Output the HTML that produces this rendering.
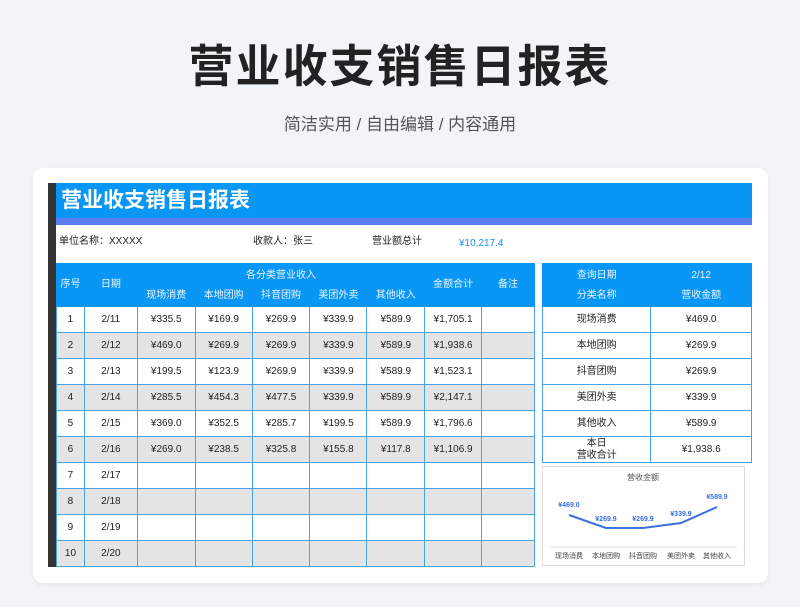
<!DOCTYPE html>
<html><head><meta charset="utf-8"><style>
*{margin:0;padding:0;box-sizing:border-box}
body{width:800px;height:607px;background:#f2f5f8;font-family:"Liberation Sans","Noto Sans CJK SC",sans-serif;position:relative;overflow:hidden;color:#222}
.a{position:absolute}
.t{left:0;width:800px;text-align:center}
.i{font-size:10px;line-height:14px;height:14px}
table{border-collapse:collapse;position:absolute;font-size:10px;text-align:center}
td{border:1px solid #4aa3e8;height:26px;color:#222;line-height:12px;vertical-align:middle}
.h td{background:#0a96f5;color:#e8f4ff;border-color:#0a96f5;height:auto}
tr.g td{background:#e4e4e4}
</style></head><body>
<div class="a t" style="top:34px;font-size:45px;line-height:66px;font-weight:bold;color:#222;letter-spacing:2px">营业收支销售日报表</div>
<div class="a t" style="top:113px;font-size:17px;line-height:24px;color:#555">简洁实用 / 自由编辑 / 内容通用</div>
<div class="a" style="left:33px;top:168px;width:735px;height:415px;background:#fff;border-radius:10px;box-shadow:0 2px 6px rgba(0,0,0,.06)"></div>
<div class="a" style="left:48px;top:183px;width:8px;height:384px;background:#333"></div>
<div class="a" style="left:56px;top:183px;width:696px;height:35px;background:#0a96f5;color:#fff;font-size:21px;line-height:30px;font-weight:bold;padding:3px 0 0 5px">营业收支销售日报表</div>
<div class="a" style="left:56px;top:218px;width:696px;height:7px;background:#5a7ef0"></div>
<div class="a i" style="left:59px;top:235px">单位名称：XXXXX</div>
<div class="a i" style="left:253px;top:235px">收款人：张三</div>
<div class="a i" style="left:372px;top:235px">营业额总计</div>
<div class="a i" style="left:459px;top:235px;color:#1e8fe8"><span style="font-family:'Noto Sans CJK SC',sans-serif">​</span>¥10,217.4</div>

<table style="left:56px;top:263px;width:479px">
<colgroup><col style="width:28px"><col style="width:53px"><col style="width:58px"><col style="width:57px"><col style="width:58px"><col style="width:57px"><col style="width:58px"><col style="width:57px"><col style="width:53px"></colgroup>
<tr class="h"><td rowspan="2" style="height:43px">序号</td><td rowspan="2">日期</td><td colspan="5" style="height:21px;padding-top:4px">各分类营业收入</td><td rowspan="2">金额合计</td><td rowspan="2">备注</td></tr>
<tr class="h"><td style="height:22px">现场消费</td><td>本地团购</td><td>抖音团购</td><td>美团外卖</td><td>其他收入</td></tr>
<tr><td>1</td><td>2/11</td><td>¥335.5</td><td>¥169.9</td><td>¥269.9</td><td>¥339.9</td><td>¥589.9</td><td>¥1,705.1</td><td></td></tr>
<tr class="g"><td>2</td><td>2/12</td><td>¥469.0</td><td>¥269.9</td><td>¥269.9</td><td>¥339.9</td><td>¥589.9</td><td>¥1,938.6</td><td></td></tr>
<tr><td>3</td><td>2/13</td><td>¥199.5</td><td>¥123.9</td><td>¥269.9</td><td>¥339.9</td><td>¥589.9</td><td>¥1,523.1</td><td></td></tr>
<tr class="g"><td>4</td><td>2/14</td><td>¥285.5</td><td>¥454.3</td><td>¥477.5</td><td>¥339.9</td><td>¥589.9</td><td>¥2,147.1</td><td></td></tr>
<tr><td>5</td><td>2/15</td><td>¥369.0</td><td>¥352.5</td><td>¥285.7</td><td>¥199.5</td><td>¥589.9</td><td>¥1,796.6</td><td></td></tr>
<tr class="g"><td>6</td><td>2/16</td><td>¥269.0</td><td>¥238.5</td><td>¥325.8</td><td>¥155.8</td><td>¥117.8</td><td>¥1,106.9</td><td></td></tr>
<tr><td>7</td><td>2/17</td><td></td><td></td><td></td><td></td><td></td><td></td><td></td></tr>
<tr class="g"><td>8</td><td>2/18</td><td></td><td></td><td></td><td></td><td></td><td></td><td></td></tr>
<tr><td>9</td><td>2/19</td><td></td><td></td><td></td><td></td><td></td><td></td><td></td></tr>
<tr class="g"><td>10</td><td>2/20</td><td></td><td></td><td></td><td></td><td></td><td></td><td></td></tr>
</table>

<table style="left:542px;top:263px;width:210px">
<colgroup><col style="width:109px"><col style="width:101px"></colgroup>
<tr class="h"><td style="height:22px;padding-top:2px">查询日期</td><td style="padding-top:2px">2/12</td></tr>
<tr class="h"><td style="height:21px">分类名称</td><td>营收金额</td></tr>
<tr><td>现场消费</td><td>¥469.0</td></tr>
<tr><td>本地团购</td><td>¥269.9</td></tr>
<tr><td>抖音团购</td><td>¥269.9</td></tr>
<tr><td>美团外卖</td><td>¥339.9</td></tr>
<tr><td>其他收入</td><td>¥589.9</td></tr>
<tr><td style="line-height:12px">本日<br>营收合计</td><td>¥1,938.6</td></tr>
</table>

<svg class="a" style="left:542px;top:466px" width="203" height="101" viewBox="542 466 203 101">
<rect x="542.5" y="466.5" width="202" height="99" fill="#fff" stroke="#ddd"/>
<text x="643" y="480" font-size="8" fill="#555" text-anchor="middle" font-family="Liberation Sans,Noto Sans CJK SC,sans-serif">营收金额</text>
<line x1="550" y1="547" x2="737" y2="547" stroke="#ddd"/>
<polyline points="569,515 606,528 643,528 681,523 717,507" fill="none" stroke="#3b6fe0" stroke-width="2"/>
<g font-size="7" font-weight="bold" fill="#3b6fe0" text-anchor="middle" font-family="Liberation Sans,sans-serif">
<text x="569" y="507">¥469.0</text><text x="606" y="521">¥269.9</text><text x="643" y="521">¥269.9</text><text x="681" y="516">¥339.9</text><text x="717" y="499">¥589.9</text></g>
<g font-size="7" fill="#444" text-anchor="middle" font-family="Liberation Sans,Noto Sans CJK SC,sans-serif">
<text x="569" y="558">现场消费</text><text x="606" y="558">本地团购</text><text x="643" y="558">抖音团购</text><text x="681" y="558">美团外卖</text><text x="717" y="558">其他收入</text></g>
</svg>
</body></html>
